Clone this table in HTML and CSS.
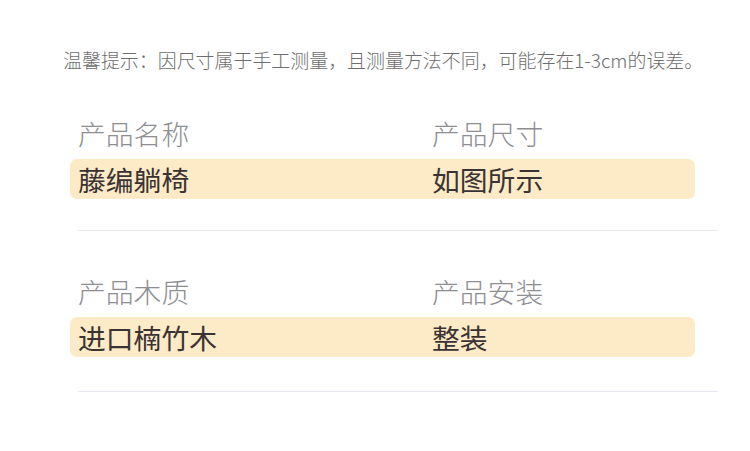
FILE: index.html
```html
<!DOCTYPE html>
<html lang="zh">
<head>
<meta charset="utf-8">
<link rel="stylesheet" href="styles.css">
</head>
<body>
<div class="page">
  <p class="tip">温馨提示：因尺寸属于手工测量，且测量方法不同，可能存在1-3cm的误差。</p>
  <section class="spec">
    <div class="labels"><span>产品名称</span><span>产品尺寸</span></div>
    <div class="values"><span>藤编躺椅</span><span>如图所示</span></div>
    <div class="rule"></div>
  </section>
  <section class="spec spec-next">
    <div class="labels"><span>产品木质</span><span>产品安装</span></div>
    <div class="values"><span>进口楠竹木</span><span>整装</span></div>
    <div class="rule"></div>
  </section>
</div>
</body>
</html>
```
FILE: styles.css
```css
html, body {
  margin: 0;
  padding: 0;
  background: #ffffff;
}
.page {
  width: 750px;
  height: 451px;
  font-family: "Noto Sans CJK SC", "Noto Sans", sans-serif;
}
.tip {
  margin: 0;
  padding: 48px 0 0 63px;
  font-size: 18.95px;
  font-weight: 300;
  line-height: 24px;
  color: #6e6e6e;
  white-space: nowrap;
}
.spec {
  margin: 41px 0 0 70px;
}
.spec-next {
  margin-top: 40px;
}
.labels, .values {
  display: grid;
  grid-template-columns: 354px 1fr;
  padding-left: 8px;
  font-size: 27.8px;
  line-height: 40px;
  width: 625px;
  box-sizing: border-box;
}
.labels {
  color: #8e8e93;
  font-weight: 300;
}
.values {
  margin-top: 6px;
  background: #fdebc7;
  border-radius: 7px;
  color: #3b3333;
}
.rule {
  margin: 31px 0 0 8px;
  width: 640px;
  height: 1px;
  background: #e9e7f2;
}
.spec-next .rule {
  margin-top: 34px;
}
```
